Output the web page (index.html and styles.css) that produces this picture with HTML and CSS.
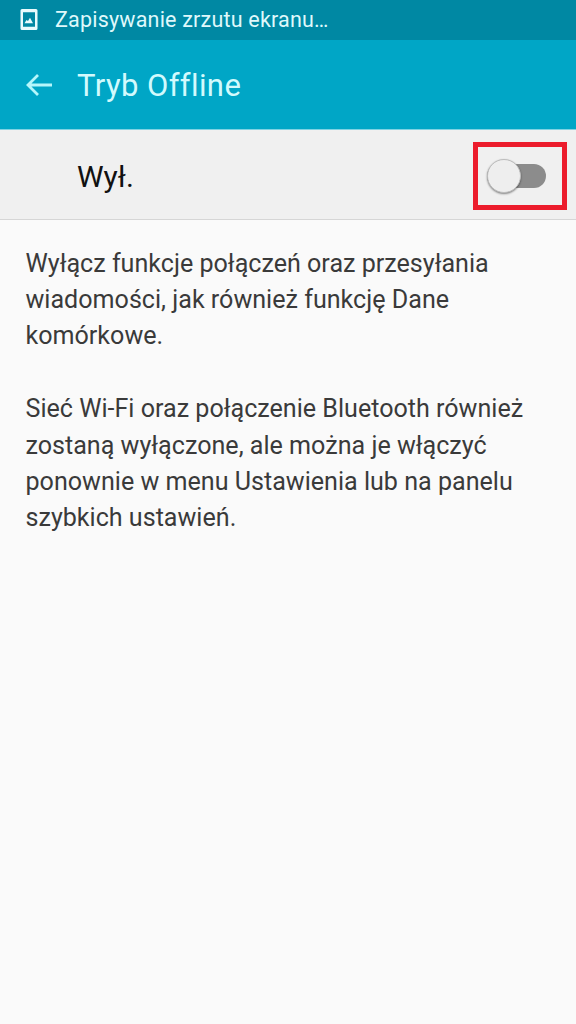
FILE: index.html
```html
<!DOCTYPE html>
<html lang="pl">
<head>
<meta charset="utf-8">
<title>Tryb Offline</title>
<link rel="stylesheet" href="styles.css">
</head>
<body>
<div class="status">
  <svg class="status-icon" width="18" height="21" viewBox="0 0 18 20" preserveAspectRatio="none"><path fill="#e9fbfd" fill-rule="evenodd" d="M2 0h14a1.500 1.500 0 0 1 1.500 1.500v17a1.500 1.500 0 0 1-1.500 1.500H2A1.500 1.500 0 0 1 .5 18.500v-17A1.500 1.500 0 0 1 2 0zm1 3v14h12V3zm1.500 10.500l2-3 1.500 1 2-3.200 3 5.200z"/></svg>
  <span class="status-text">Zapisywanie zrzutu ekranu…</span>
</div>
<header class="bar">
  <svg class="back" width="28" height="24" viewBox="0 0 28 24"><path fill="none" stroke="#b5f6fb" stroke-width="2.800" d="M27 12H3M13 2L3 12l10 10"/></svg>
  <h1 class="title">Tryb Offline</h1>
</header>
<section class="switch-row">
  <span class="switch-label">Wył.</span>
  <div class="highlight">
    <div class="track"><div class="thumb"></div></div>
  </div>
</section>
<main class="content">
  <p>Wyłącz funkcje połączeń oraz przesyłania<br>wiadomości, jak również funkcję Dane<br>komórkowe.</p>
  <p>Sieć Wi-Fi oraz połączenie Bluetooth również<br>zostaną wyłączone, ale można je włączyć<br>ponownie w menu Ustawienia lub na panelu<br>szybkich ustawień.</p>
</main>
</body>
</html>
```
FILE: styles.css
```css
* { box-sizing: border-box; }
html, body { margin: 0; height: 100%; }
body { width: 576px; height: 1024px; overflow: hidden; background: #fafafa; font-family: Roboto, "Liberation Sans", sans-serif; display: flex; flex-direction: column; }
.status { height: 40px; background: #0088a3; display: flex; align-items: center; padding-left: 20px; flex: none; }
.status-icon { display: block; margin-top: -1px; }
.status-text { margin: -1px 0 0 17px; font-size: 21.500px; letter-spacing: 0.2px; color: #dff8fb; }
.bar { height: 90px; background: #00a6c6; border-bottom: 1px solid #7fd3e3; display: flex; align-items: center; padding-left: 25px; flex: none; }
.back { display: block; }
.title { margin: 2px 0 0 24px; font-size: 31px; font-weight: 400; color: #d2fafd; letter-spacing: 0.4px; }
.switch-row { height: 90px; background: #f0f0f0; border-bottom: 1px solid #d6d6d6; display: flex; align-items: center; justify-content: space-between; padding: 3px 9px 0 77px; flex: none; }
.switch-label { font-size: 30px; color: #111; }
.highlight { width: 94px; height: 68px; border: 5px solid #ec1c2c; display: flex; align-items: center; padding-left: 9px; }
.track { width: 59px; height: 24px; border-radius: 12px; background: #8c8c8c; position: relative; }
.thumb { position: absolute; left: 0; top: -5px; width: 34px; height: 34px; border-radius: 50%; background: #eeeeee; border: 1px solid #bdbdbd; box-shadow: 0 1px 2px rgba(0,0,0,.45); }
.content { padding: 25.500px 25.500px 0; font-size: 25.100px; line-height: 36.400px; color: #3a3a3a; }
.content p { margin: 0 0 36.400px; white-space: nowrap; }
```
